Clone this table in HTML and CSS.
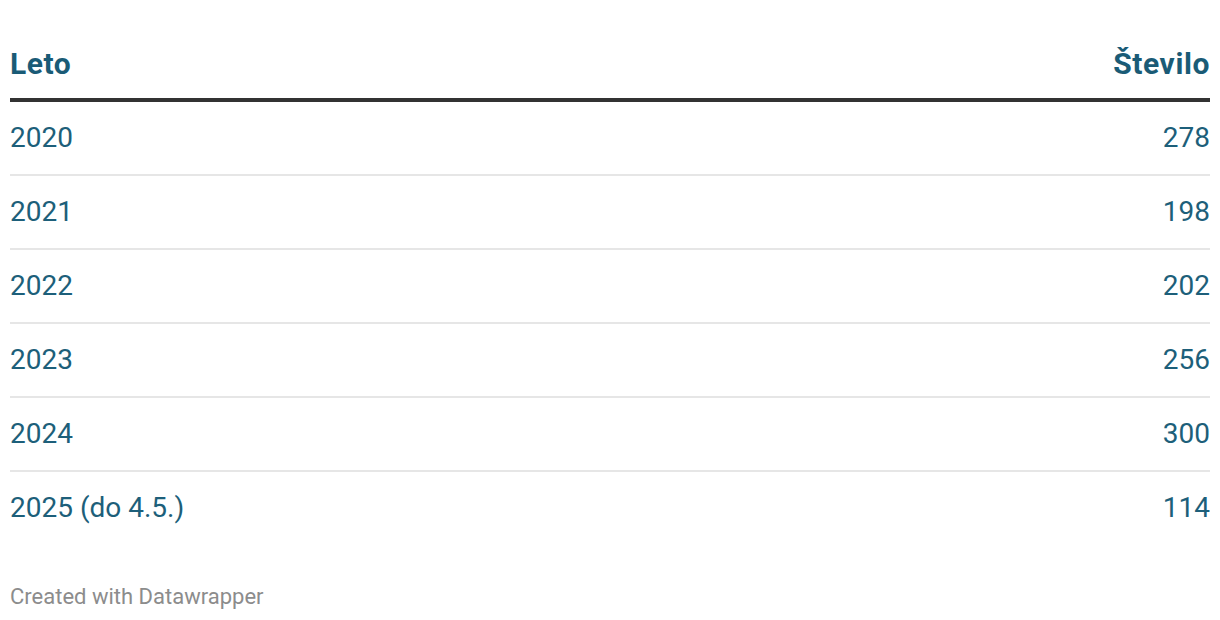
FILE: index.html
```html
<!DOCTYPE html>
<html lang="sl">
<head>
<meta charset="utf-8">
<title>Tabela</title>
<link rel="stylesheet" href="styles.css">
</head>
<body>
<div class="chart">
  <table class="tbl">
    <thead>
      <tr><th class="c-left">Leto</th><th class="c-right">Število</th></tr>
    </thead>
    <tbody>
      <tr><td class="c-left">2020</td><td class="c-right">278</td></tr>
      <tr><td class="c-left">2021</td><td class="c-right">198</td></tr>
      <tr><td class="c-left">2022</td><td class="c-right">202</td></tr>
      <tr><td class="c-left">2023</td><td class="c-right">256</td></tr>
      <tr><td class="c-left">2024</td><td class="c-right">300</td></tr>
      <tr><td class="c-left">2025 (do 4.5.)</td><td class="c-right">114</td></tr>
    </tbody>
  </table>
  <div class="footer">Created with Datawrapper</div>
</div>
</body>
</html>
```
FILE: styles.css
```css
html, body {
  margin: 0;
  padding: 0;
  background: #ffffff;
}
body {
  font-family: Roboto, "Liberation Sans", sans-serif;
  color: #1d5f7a;
}
.chart {
  padding: 48px 10px 0 10px;
}
.tbl {
  width: 1200px;
  border-collapse: collapse;
}
.tbl th {
  font-weight: 700;
  font-size: 30px;
  letter-spacing: 0.5px;
  line-height: 32px;
  padding: 0 0 18px 0;
  border-bottom: 4px solid #333333;
  color: #1a5b76;
}
.tbl th.c-right {
  letter-spacing: 0.6px;
}
.tbl td {
  font-size: 28px;
  line-height: 32px;
  height: 72px;
  padding: 0;
  border-bottom: 2px solid #e6e6e6;
  vertical-align: middle;
}
.tbl tbody tr:last-child td {
  border-bottom: none;
}
.c-left { text-align: left; }
.c-right { text-align: right; }
.footer {
  margin-top: 41px;
  font-size: 22px;
  line-height: 24px;
  color: #8c8c8c;
}
```
